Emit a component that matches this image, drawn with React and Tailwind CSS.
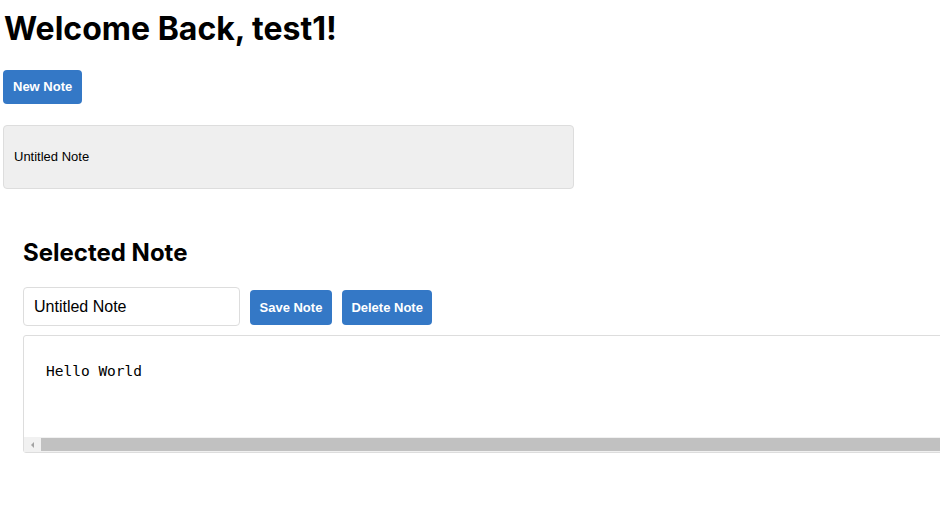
export default function App() {
  return (
    <div className="w-[940px] h-[529px] overflow-hidden bg-white px-[3px] pt-[9px] font-['Liberation_Sans',sans-serif] text-black">
      <h1 className="ml-[1px] text-[32px] leading-[40px] font-bold font-['Inter',sans-serif]">
        Welcome Back, test1!
      </h1>

      <button className="mt-[21px] h-[34px] px-[10px] rounded-[4px] bg-[#3478c6] text-white text-[13px] font-bold">
        New Note
      </button>

      <div className="mt-[21px] w-[571px] h-[64px] flex items-center px-[10px] rounded-[4px] border border-[#dddddd] bg-[#efefef] text-[13px]">
        Untitled Note
      </div>

      <section className="mt-[48px] pl-[20px]">
        <h2 className="text-[24px] leading-[32px] font-bold font-['Inter',sans-serif]">Selected Note</h2>

        <div className="mt-[18px] flex items-start gap-[10px]">
          <input
            defaultValue="Untitled Note"
            className="w-[217px] h-[39px] px-[10px] rounded-[4px] border border-[#dddddd] text-[16px] outline-none"
          />
          <button className="mt-[3px] h-[35px] px-[9.5px] rounded-[4px] bg-[#3478c6] text-white text-[13px] font-bold">
            Save Note
          </button>
          <button className="mt-[3px] h-[35px] px-[9.5px] rounded-[4px] bg-[#3478c6] text-white text-[13px] font-bold">
            Delete Note
          </button>
        </div>

        <div className="mt-[9px] w-[960px] h-[118px] flex flex-col rounded-[3px] border border-[#dddddd] bg-white">
          <div className="flex-1 pl-[22px] pt-[25px] font-['DejaVu_Sans_Mono',monospace] text-[14.5px] leading-[20px]">
            Hello World
          </div>
          <div className="h-[15px] flex items-center bg-[#f1f1f1]">
            <div className="w-[17px] flex justify-center">
              <div className="w-0 h-0 border-y-[3px] border-y-transparent border-r-[3px] border-r-[#a3a3a3]" />
            </div>
            <div className="flex-1 h-[13px] bg-[#c1c1c1]" />
          </div>
        </div>
      </section>
    </div>
  );
}
